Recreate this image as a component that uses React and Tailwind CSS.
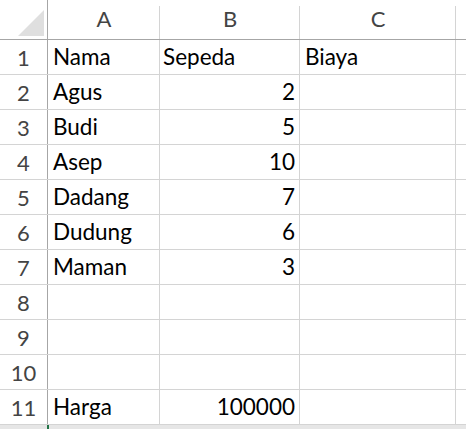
import React from "react";

const rows = [
  ["Nama", "Sepeda", "Biaya", true],
  ["Agus", "2", ""],
  ["Budi", "5", ""],
  ["Asep", "10", ""],
  ["Dadang", "7", ""],
  ["Dudung", "6", ""],
  ["Maman", "3", ""],
  ["", "", ""],
  ["", "", ""],
  ["", "", ""],
  ["Harga", "100000", ""],
];

export default function App() {
  return (
    <div
      className="w-[466px] h-[429px] overflow-hidden bg-white text-black"
      style={{ fontFamily: "Lato, 'Open Sans', sans-serif" }}
    >
      {/* header row */}
      <div className="flex h-[40px] border-b border-[#a6a6a6]">
        <div className="w-[48px] shrink-0 border-r border-[#a6a6a6] relative">
          <div
            className="absolute left-[18px] top-[10px] w-[26px] h-[26px] bg-[#dfdfdf]"
            style={{ clipPath: "polygon(100% 0, 100% 100%, 0 100%)" }}
          />
        </div>
        {[
          ["A", "w-[112px]"],
          ["B", "w-[140px]"],
          ["C", "w-[156px]"],
        ].map(([l, w]) => (
          <div key={l} className={`${w} shrink-0 relative flex items-center justify-center text-[22px] text-[#444]`}>
            <span className="pb-[2px]">{l}</span>
            <div className="absolute right-0 top-[6px] bottom-0 w-px bg-[#d4d4d4]" />
          </div>
        ))}
        <div className="flex-1" />
      </div>
      {rows.map((r, i) => (
        <div key={i} className="flex h-[35px] border-b border-[#d4d4d4]">
          <div className="w-[48px] shrink-0 border-r border-[#a6a6a6] flex items-center justify-center text-[22px] text-[#444]">
            {i + 1}
          </div>
          <div className="w-[112px] shrink-0 border-r border-[#d4d4d4] flex items-center pl-[5px] text-[22.5px]">
            {r[0]}
          </div>
          <div
            className={
              r[3]
                ? "w-[140px] shrink-0 border-r border-[#d4d4d4] flex items-center pl-[3px] text-[22.5px]"
                : "w-[140px] shrink-0 border-r border-[#d4d4d4] flex items-center justify-end pr-[4px] text-[22.5px]"
            }
          >
            {r[1]}
          </div>
          <div className="w-[156px] shrink-0 border-r border-[#d4d4d4] flex items-center pl-[5px] text-[22.5px]">
            {r[2]}
          </div>
          <div className="flex-1" />
        </div>
      ))}
      <div className="h-[10px] bg-[#e6e6e6] relative">
        <div className="absolute left-[47px] top-0 w-[2px] h-full bg-[#217346]" />
      </div>
    </div>
  );
}
